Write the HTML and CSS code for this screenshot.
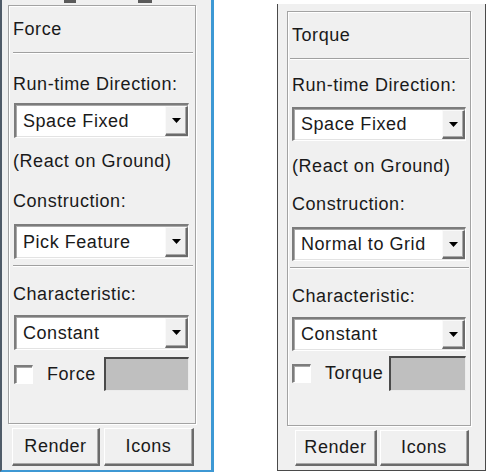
FILE: index.html
```html
<!DOCTYPE html>
<html>
<head>
<meta charset="utf-8">
<link rel="stylesheet" href="styles.css">
</head>
<body>
<div class="stage">
  <div class="win win-force">
    <div class="topstrip"><span class="mark mark-a"></span><span class="mark mark-b"></span></div>
    <div class="group">
      <div class="title">Force</div>
      <div class="sep sep1"></div>
      <div class="label lab1">Run-time Direction:</div>
      <div class="select sel1"><span class="val">Space Fixed</span><span class="drop"><svg width="9" height="5" viewBox="0 0 9 5"><polygon points="0,0 9,0 4.5,5" fill="#000"/></svg></span></div>
      <div class="label lab2">(React on Ground)</div>
      <div class="label lab3">Construction:</div>
      <div class="select sel2"><span class="val">Pick Feature</span><span class="drop"><svg width="9" height="5" viewBox="0 0 9 5"><polygon points="0,0 9,0 4.5,5" fill="#000"/></svg></span></div>
      <div class="sep sep2"></div>
      <div class="label lab4">Characteristic:</div>
      <div class="select sel3"><span class="val">Constant</span><span class="drop"><svg width="9" height="5" viewBox="0 0 9 5"><polygon points="0,0 9,0 4.5,5" fill="#000"/></svg></span></div>
      <div class="row"><span class="check"></span><span class="check-label">Force</span><span class="field"></span></div>
    </div>
    <div class="buttons"><div class="btn btn-render">Render</div><div class="btn btn-icons">Icons</div></div>
  </div>

  <div class="win win-torque">
    <div class="group">
      <div class="title">Torque</div>
      <div class="sep sep1"></div>
      <div class="label lab1">Run-time Direction:</div>
      <div class="select sel1"><span class="val">Space Fixed</span><span class="drop"><svg width="9" height="5" viewBox="0 0 9 5"><polygon points="0,0 9,0 4.5,5" fill="#000"/></svg></span></div>
      <div class="label lab2">(React on Ground)</div>
      <div class="label lab3">Construction:</div>
      <div class="select sel2"><span class="val">Normal to Grid</span><span class="drop"><svg width="9" height="5" viewBox="0 0 9 5"><polygon points="0,0 9,0 4.5,5" fill="#000"/></svg></span></div>
      <div class="sep sep2"></div>
      <div class="label lab4">Characteristic:</div>
      <div class="select sel3"><span class="val">Constant</span><span class="drop"><svg width="9" height="5" viewBox="0 0 9 5"><polygon points="0,0 9,0 4.5,5" fill="#000"/></svg></span></div>
      <div class="row"><span class="check"></span><span class="check-label">Torque</span><span class="field"></span></div>
    </div>
    <div class="buttons"><div class="btn btn-render">Render</div><div class="btn btn-icons">Icons</div></div>
  </div>
</div>
</body>
</html>
```

FILE: styles.css
```css
* { box-sizing: border-box; }

body {
  margin: 0;
  background: #ffffff;
  font-family: "Liberation Sans", Arial, sans-serif;
  font-size: 18px;
  letter-spacing: 0.55px;
  color: #1a1a1a;
}

.stage {
  display: flex;
  align-items: flex-start;
  width: 488px;
  height: 473px;
}

.win {
  background: #f0f0f0;
  display: flex;
  flex-direction: column;
}

.win-force {
  width: 214px;
  height: 472px;
  border-left: 2px solid #4f5b68;
  border-right: 3px solid #3d98d4;
  border-bottom: 2px solid #3d98d4;
  padding-left: 6px;
  --group-mt: 0px;
  --group-w: 188px;
  --group-h: 419px;
  --title-mt: 13px;
  --sep1-mt: 13px;
  --lab1-mt: 20px;
  --sel1-mt: 9px;
  --lab2-mt: 13px;
  --lab3-mt: 20px;
  --sel2-mt: 13px;
  --sep2-mt: 6px;
  --lab4-mt: 17px;
  --sel3-mt: 11px;
  --row-mt: 7px;
  --sel-h: 35px;
  --sel-w: 175px;
  --sel-ml: 1px;
  --sep-ml: 0px;
  --sep-w: 180px;
  --row-h: 34px;
  --btn-mt: 4px;
  --btn-ml: 4px;
  --btn-gap: 4px;
  --btn-h: 38px;
  --render-w: 88px;
  --icons-w: 90px;
  --field-ml: 8px;
}

.win-torque {
  margin-left: 63px;
  margin-top: 4px;
  width: 209px;
  height: 467px;
  border: 1px solid #4a4a4a;
  border-top: none;
  padding-left: 9px;
  --group-mt: 7px;
  --group-w: 184px;
  --group-h: 415px;
  --title-mt: 13px;
  --sep1-mt: 13px;
  --lab1-mt: 15px;
  --sel1-mt: 12px;
  --lab2-mt: 15px;
  --lab3-mt: 18px;
  --sel2-mt: 13px;
  --sep2-mt: 6px;
  --lab4-mt: 17px;
  --sel3-mt: 11px;
  --row-mt: 5px;
  --sel-h: 34px;
  --sel-w: 174px;
  --sel-ml: 0px;
  --sep-ml: -2px;
  --sep-w: 179px;
  --row-h: 35px;
  --btn-mt: 4px;
  --btn-ml: 8px;
  --btn-gap: 3px;
  --btn-h: 36px;
  --render-w: 82px;
  --icons-w: 89px;
  --field-ml: 6px;
}

.topstrip {
  height: 5px;
  display: flex;
  align-items: flex-start;
}

.mark {
  height: 3px;
  background: #5a5a5a;
}

.mark-a { width: 12px; margin-left: 56px; }
.mark-b { width: 14px; margin-left: 62px; }

.group {
  margin-top: var(--group-mt);
  width: var(--group-w);
  height: var(--group-h);
  border: 1px solid #a3a3a3;
  box-shadow: inset 1px 1px 0 #ffffff, 1px 1px 0 #ffffff;
  padding-left: 4px;
  display: flex;
  flex-direction: column;
}

.title, .label {
  line-height: 20px;
  height: 20px;
  white-space: nowrap;
}

.title { margin-top: var(--title-mt); }
.lab1 { margin-top: var(--lab1-mt); }
.lab2 { margin-top: var(--lab2-mt); }
.lab3 { margin-top: var(--lab3-mt); }
.lab4 { margin-top: var(--lab4-mt); }

.sep {
  height: 2px;
  width: var(--sep-w);
  margin-left: var(--sep-ml);
  border-top: 1px solid #a0a0a0;
  border-bottom: 1px solid #ffffff;
}

.sep1 { margin-top: var(--sep1-mt); }
.sep2 { margin-top: var(--sep2-mt); }

.select {
  display: flex;
  align-items: stretch;
  width: var(--sel-w);
  height: var(--sel-h);
  margin-left: var(--sel-ml);
  background: #ffffff;
  border-style: solid;
  border-width: 2px 1px 1px 2px;
  border-color: #7c7c7c #ffffff #ffffff #7c7c7c;
  box-shadow: inset 1px 1px 0 #a8a8a8, inset -1px -1px 0 #e3e3e3;
}

.sel1 { margin-top: var(--sel1-mt); }
.sel2 { margin-top: var(--sel2-mt); }
.sel3 { margin-top: var(--sel3-mt); }

.val {
  flex: 1;
  padding-left: 7px;
  display: flex;
  align-items: center;
  white-space: nowrap;
  overflow: hidden;
}

.drop {
  width: 23px;
  margin: 1px 0 1px 0;
  background: #f0f0f0;
  border-style: solid;
  border-width: 1px 2px 2px 1px;
  border-color: #fafafa #6b6b6b #6b6b6b #fafafa;
  box-shadow: inset -1px -1px 0 #a8a8a8;
  display: flex;
  align-items: center;
  justify-content: center;
}

.row {
  display: flex;
  align-items: center;
  width: var(--sel-w);
  height: var(--row-h);
  margin-left: var(--sel-ml);
  margin-top: var(--row-mt);
}

.check {
  width: 19px;
  height: 19px;
  flex: none;
  background: #ffffff;
  border-style: solid;
  border-width: 2px 1px 1px 2px;
  border-color: #7c7c7c #ffffff #ffffff #7c7c7c;
  box-shadow: inset 1px 1px 0 #a8a8a8;
}

.check-label {
  margin-left: 14px;
  white-space: nowrap;
}

.field {
  flex: 1;
  height: 100%;
  margin-left: var(--field-ml);
  background: #bfbfbf;
  border-style: solid;
  border-width: 2px 1px 1px 2px;
  border-color: #4a4a4a #ececec #ececec #4a4a4a;
}

.buttons {
  display: flex;
  margin-top: var(--btn-mt);
  margin-left: var(--btn-ml);
  gap: var(--btn-gap);
}

.btn {
  height: var(--btn-h);
  display: flex;
  align-items: center;
  justify-content: center;
  background: #f0f0f0;
  border-style: solid;
  border-width: 1px 2px 2px 1px;
  border-color: #ffffff #6b6b6b #6b6b6b #ffffff;
  box-shadow: inset -1px -1px 0 #a8a8a8;
}

.btn-render { width: var(--render-w); }
.btn-icons { width: var(--icons-w); }
```
